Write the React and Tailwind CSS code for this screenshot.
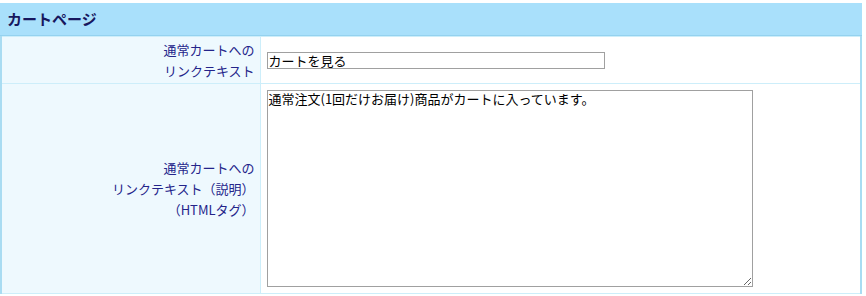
import React from 'react';

const labelBg =
  'bg-[image:repeating-conic-gradient(#dcf3fd_0_25%,#ffffff_0_50%)] bg-[length:2px_2px]';

const Label = ({ children, className = '' }) => (
  <th
    className={`w-[259px] border border-[#cdeefa] ${labelBg} pr-[5px] text-right align-middle font-normal text-[13px] leading-[21px] text-[#24248a] ${className}`}
  >
    {children}
  </th>
);

export default function App() {
  return (
    <div className="w-[862px] pt-[3px] font-['Noto_Sans_CJK_JP','Noto_Sans',sans-serif]">
      <div className="flex h-[33px] items-center border-b border-[#95d2ef] bg-[#a9e0fb] px-[7px]">
        <h2 className="text-[15px] font-bold text-[#17175e]">カートページ</h2>
      </div>
      <table className="w-full border-collapse border-x-2 border-[#a9dcf2]">
        <tbody>
          <tr className="h-[47px]">
            <Label>
              通常カートへの
              <br />
              リンクテキスト
            </Label>
            <td className="border border-[#cdeefa] bg-white pl-[6px] align-middle">
              <input
                type="text"
                defaultValue="カートを見る"
                className="block h-[17px] w-[338px] border border-[#a0a0a0] px-[1px] text-[13px] leading-[15px] text-black outline-none"
              />
            </td>
          </tr>
          <tr className="h-[210px]">
            <Label className="leading-[20.5px]">
              通常カートへの
              <br />
              リンクテキスト（説明）
              <br />
              （HTMLタグ）
            </Label>
            <td className="border border-[#cdeefa] bg-white pl-[6px] align-top pt-[6px]">
              <textarea
                defaultValue="通常注文(1回だけお届け)商品がカートに入っています。"
                className="block h-[197px] w-[486px] border border-[#a0a0a0] px-[1px] text-[13px] leading-[16px] text-black outline-none"
              />
            </td>
          </tr>
        </tbody>
      </table>
    </div>
  );
}
